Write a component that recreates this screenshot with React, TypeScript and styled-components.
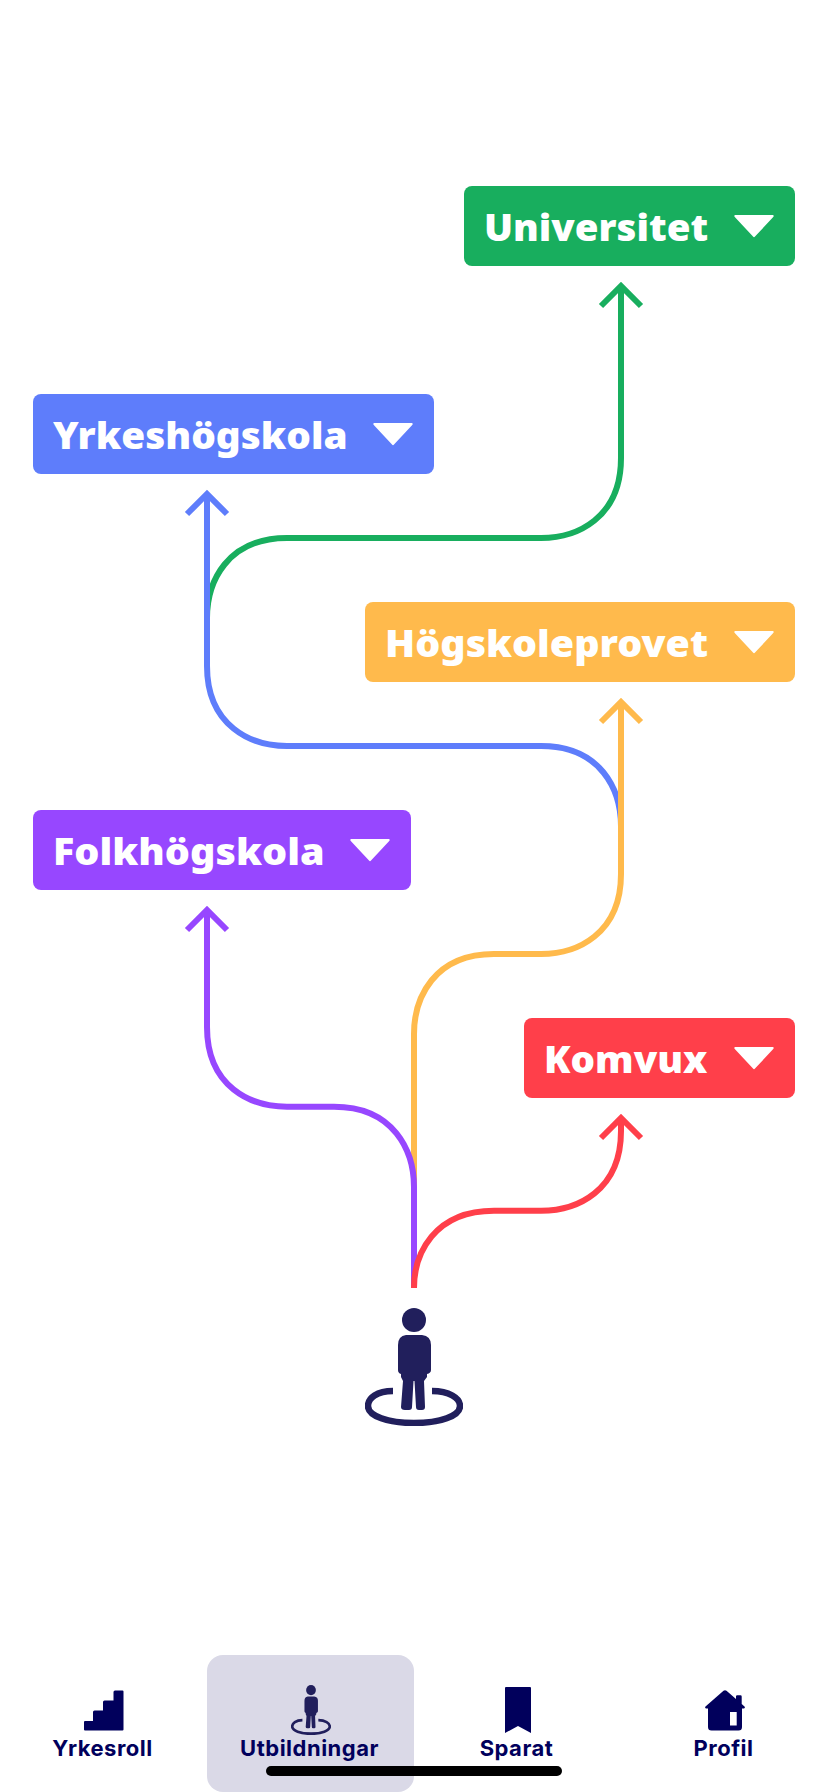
import React from "react";
import styled, { createGlobalStyle } from "styled-components";

const GlobalStyle = createGlobalStyle`
  * { box-sizing: border-box; }
  html, body { margin: 0; padding: 0; background: #fff; }
`;

const Screen = styled.main`
  position: relative;
  display: flex;
  flex-direction: column;
  width: 828px;
  height: 1792px;
  overflow: hidden;
  background: #fff;
  font-family: Inter, "Liberation Sans", sans-serif;
`;

const PathMap = styled.section`
  position: relative;
  display: flex;
  flex-direction: column;
  gap: 128px;
  height: 1655px;
  padding: 186px 33px 0;
`;

const Routes = styled.svg`
  position: absolute;
  left: 0;
  top: 0;
`;

const Stop = styled.button<{ $color: string; $side: "start" | "end"; $width: number }>`
  position: relative;
  display: flex;
  flex: none;
  align-items: center;
  justify-content: space-between;
  align-self: flex-${(p) => p.$side};
  width: ${(p) => p.$width}px;
  height: 80px;
  padding: 0 21px 0 20px;
  border: 0;
  border-radius: 8px;
  background: ${(p) => p.$color};
  color: #fff;
`;

const StopLabel = styled.span<{ $stretch: number }>`
  margin-top: 2px;
  font: 900 37.4px/52px "Noto Sans", "Open Sans", sans-serif;
  transform: scaleX(${(p) => p.$stretch});
  transform-origin: left center;
  white-space: nowrap;
`;

const Caret = styled.svg`
  flex: none;
  width: 40px;
  height: 23px;
`;

const PersonSpot = styled.div`
  display: flex;
  justify-content: center;
  margin-top: 82px;
`;

const Nav = styled.nav`
  display: grid;
  grid-template-columns: repeat(4, 207px);
  height: 137px;
`;

const NavItem = styled.a<{ $active?: boolean }>`
  display: flex;
  flex-direction: column;
  align-items: center;
  padding-top: 29px;
  border-radius: 16px;
  background: ${(p) => (p.$active ? "#dad9e7" : "transparent")};
  color: #01005c;
`;

const IconSlot = styled.div`
  display: flex;
  align-items: center;
  justify-content: center;
  height: 52px;
`;

const NavLabel = styled.span`
  margin: -1px 2px 0 0;
  font-size: 22px;
  font-weight: 650;
  line-height: 26px;
  letter-spacing: 0.5px;
`;

const HomeIndicator = styled.div`
  position: absolute;
  left: 266px;
  bottom: 16px;
  width: 296px;
  height: 10px;
  border-radius: 5px;
  background: #000;
`;

const stops = [
  { name: "Universitet", color: "#18ae5e", side: "end", width: 331, stretch: 1.028 },
  { name: "Yrkeshögskola", color: "#5e7dfb", side: "start", width: 401, stretch: 1.036 },
  { name: "Högskoleprovet", color: "#ffba4c", side: "end", width: 430, stretch: 1.054 },
  { name: "Folkhögskola", color: "#9747ff", side: "start", width: 378, stretch: 1.058 },
  { name: "Komvux", color: "#ff3f4a", side: "end", width: 271, stretch: 1.032 },
] as const;

const routes = [
  { color: "#18ae5e", d: "M207 618C207 582 227 538 287 538H541C577 538 621 518 621 458V286M601 306L621 286L641 306" },
  { color: "#5e7dfb", d: "M621 826C621 790 601 746 541 746H287C251 746 207 726 207 666V494M187 514L207 494L227 514" },
  { color: "#ffba4c", d: "M414 1288V1034C414 998 434 954 494 954H541C577 954 621 934 621 874V702M601 722L621 702L641 722" },
  { color: "#9747ff", d: "M414 1288V1187C414 1151 394 1106.7 334 1106.7H287C251 1106.7 207 1087 207 1027V910M187 930L207 910L227 930" },
  { color: "#ff3f4a", d: "M414 1288C414 1254 434 1210.7 494 1210.7H541C577 1210.7 621 1191 621 1131V1118M601 1138L621 1118L641 1138" },
];

function Person({ width, height }: { width: number; height: number }) {
  return (
    <svg width={width} height={height} viewBox="0 0 98 118" preserveAspectRatio="none" fill="#211f5c">
      <circle cx="49" cy="12" r="12" />
      <path d="M41 27H57Q66 28 66 37V62Q66 65 62 66V69L59 73L60 99Q60 102 57 102H54Q51 102 51 99L49.500 73H48.500L47 99Q47 102 44 102H40Q36 102 36 99L38 73L36 69V66Q33 65 33 62V37Q33 28 41 27Z" />
      <path d="M28 83C12 83 3 90 3 98C3 108 23 115 49 115S95 108 95 98C95 90 84 83 67 83" fill="none" stroke="#211f5c" strokeWidth="6.500" />
    </svg>
  );
}

function Stairs() {
  return (
    <svg width="40" height="41" viewBox="0 0 40 41" fill="#01005c">
      <path d="M0 32Q0 31 1 31H9V22Q9 20.500 10.500 20.500H19V12Q19 10.500 20.500 10.500H29.500V2Q29.500 .5 31 .5H38.500Q39.500 .5 39.500 1.500V39.500Q39.500 40.500 38.500 40.500H1Q0 40.500 0 39.500Z" />
    </svg>
  );
}

function Bookmark() {
  return (
    <svg width="26" height="46" viewBox="0 0 26 46" fill="#01005c">
      <path d="M1 0H25Q26 0 26 1V46L13 39L0 46V1Q0 0 1 0Z" />
    </svg>
  );
}

function House() {
  return (
    <svg width="40" height="41" viewBox="0 0 40 41" fill="#01005c" fillRule="evenodd">
      <path d="M18.500 .8Q20 -.5 21.500 .8L31 9V6.500Q31 5.300 32.200 5.300H35.500Q36.700 5.300 36.700 6.500V14L39.500 16.500Q40.500 18 39 18.600H37V37Q37 40.500 33.500 40.500H6.500Q3 40.500 3 37V18.600H1Q-.5 18 .5 16.500ZM25 22V35.500H31.700V22Z" />
    </svg>
  );
}

export default function App() {
  return (
    <Screen>
      <GlobalStyle />
      <PathMap>
        <Routes width="828" height="1655" fill="none" strokeWidth="6">
          {routes.map((r) => (
            <path key={r.color} d={r.d} stroke={r.color} />
          ))}
        </Routes>
        {stops.map((s) => (
          <Stop key={s.name} $color={s.color} $side={s.side} $width={s.width}>
            <StopLabel $stretch={s.stretch}>{s.name}</StopLabel>
            <Caret viewBox="0 0 40 23" fill="#fff">
              <path d="M1 0H39Q40.500 .8 39 2.300L21 21.500Q20 22.800 19 21.500L1 2.300Q-.5 .8 1 0Z" />
            </Caret>
          </Stop>
        ))}
        <PersonSpot>
          <Person width={98} height={118} />
        </PersonSpot>
      </PathMap>
      <Nav>
        <NavItem>
          <IconSlot><Stairs /></IconSlot>
          <NavLabel>Yrkesroll</NavLabel>
        </NavItem>
        <NavItem $active>
          <IconSlot><Person width={40} height={50} /></IconSlot>
          <NavLabel>Utbildningar</NavLabel>
        </NavItem>
        <NavItem>
          <IconSlot><Bookmark /></IconSlot>
          <NavLabel>Sparat</NavLabel>
        </NavItem>
        <NavItem>
          <IconSlot><House /></IconSlot>
          <NavLabel>Profil</NavLabel>
        </NavItem>
      </Nav>
      <HomeIndicator />
    </Screen>
  );
}
